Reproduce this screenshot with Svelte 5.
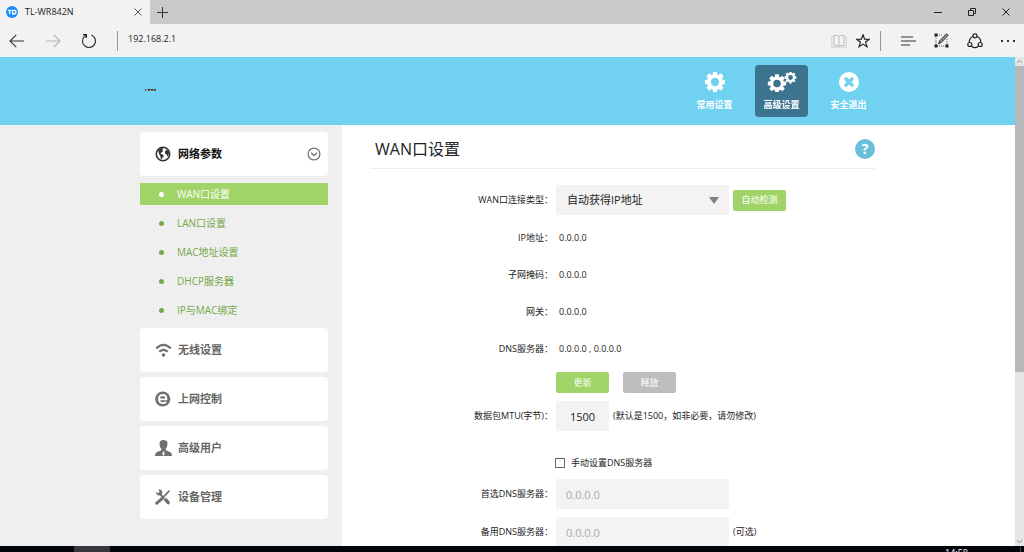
<script lang="ts">
  const subItems = ['WAN口设置', 'LAN口设置', 'MAC地址设置', 'DHCP服务器', 'IP与MAC绑定'];

  const sections = [
    { icon: 'wifi', label: '无线设置' },
    { icon: 'web', label: '上网控制' },
    { icon: 'user', label: '高级用户' },
    { icon: 'tools', label: '设备管理' }
  ];

  const navItems = [
    { id: 'basic', label: '常用设置' },
    { id: 'advanced', label: '高级设置' },
    { id: 'exit', label: '安全退出' }
  ];

  const status = [
    { label: 'IP地址', value: '0.0.0.0' },
    { label: '子网掩码', value: '0.0.0.0' },
    { label: '网关', value: '0.0.0.0' },
    { label: 'DNS服务器', value: '0.0.0.0 , 0.0.0.0' }
  ];

  const teeth = [0, 45, 90, 135, 180, 225, 270, 315];

  let activeNav = $state('advanced');
  let activeSub = $state('WAN口设置');
  let wanType = $state('dynamic');
  let mtu = $state('1500');
  let manualDns = $state(false);
</script>

{#snippet gear(cx: number, cy: number, r: number)}
  <g transform="translate({cx} {cy}) scale({r / 10})">
    <circle r="6" fill="none" stroke="#fff" stroke-width="3.6" />
    {#each teeth as angle}
      <path d="M-2.4 -7L-2 -10.2H2L2.4 -7Z" fill="#fff" transform="rotate({angle})" />
    {/each}
  </g>
{/snippet}

<div class="window">
  <div class="tabs">
    <div class="tab">
      <svg width="12" height="12" viewBox="0 0 12 12">
        <circle cx="6" cy="6" r="6" fill="#1a8cff" />
        <path d="M1.8 4.3H5.6M3.7 4.3V8.2M6.7 4.3V8H8.2Q10 8 10 6.2Q10 4.3 8.2 4.3H6" fill="none" stroke="#fff" stroke-width="1.3" />
      </svg>
      <span class="tab-title">TL-WR842N</span>
      <button class="bare" aria-label="关闭标签页">
        <svg width="8" height="8" viewBox="0 0 8 8"><path d="M0.5 0.5L7.5 7.5M7.5 0.5L0.5 7.5" stroke="#555" /></svg>
      </button>
    </div>
    <button class="bare new-tab" aria-label="新建标签页">
      <svg width="11" height="11" viewBox="0 0 11 11"><path d="M5.5 0V11M0 5.5H11" stroke="#333" /></svg>
    </button>
    <div class="window-controls">
      <button class="bare" aria-label="最小化">
        <svg width="8" height="8" viewBox="0 0 8 8"><path d="M0 4.5H8" stroke="#222" /></svg>
      </button>
      <button class="bare" aria-label="还原">
        <svg width="8" height="8" viewBox="0 0 8 8"><path d="M0.5 2.5H5.5V7.5H0.5ZM2.5 2.5V0.5H7.5V5.5H5.5" fill="none" stroke="#222" /></svg>
      </button>
      <button class="bare" aria-label="关闭">
        <svg width="8" height="8" viewBox="0 0 8 8"><path d="M0.5 0.5L7.5 7.5M7.5 0.5L0.5 7.5" stroke="#222" /></svg>
      </button>
    </div>
  </div>

  <div class="toolbar">
    <div class="history">
      <button class="bare" aria-label="后退">
        <svg width="16" height="14" viewBox="0 0 16 14"><path d="M15 7H1M7.3 0.8L1 7L7.3 13.2" fill="none" stroke="#333" stroke-width="1.1" /></svg>
      </button>
      <button class="bare" aria-label="前进">
        <svg width="16" height="14" viewBox="0 0 16 14"><path d="M1 7H15M8.7 0.8L15 7L8.7 13.2" fill="none" stroke="#b4b4b4" stroke-width="1.1" /></svg>
      </button>
      <button class="bare" aria-label="刷新">
        <svg width="16" height="16" viewBox="0 0 16 16">
          <path d="M10.5 2A6.5 6.5 0 1 1 3.6 3.2" fill="none" stroke="#333" stroke-width="1.2" />
          <path d="M2.2 1.8H5.2V4.8" fill="none" stroke="#111" stroke-width="1.5" />
        </svg>
      </button>
    </div>
    <input class="address" aria-label="地址" value="192.168.2.1" />
    <div class="page-actions">
      <button class="bare" aria-label="阅读视图">
        <svg width="16" height="14" viewBox="0 0 16 14">
          <path d="M3 1.5H6.5L8 2.5L9.5 1.5H13V11.5H9.5L8 12.5L6.5 11.5H3ZM8 2.5V12.5" fill="none" stroke="#bdbdbd" />
          <path d="M3 2.5H0.8V13.2H15.2V2.5H13" fill="none" stroke="#cfcfcf" />
        </svg>
      </button>
      <button class="bare" aria-label="添加到收藏夹">
        <svg width="14" height="14" viewBox="0 0 14 14"><path d="M7 0.8L8.6 5.1L13.2 5.3L9.6 8.1L10.9 12.7L7 10.1L3.1 12.7L4.4 8.1L0.8 5.3L5.4 5.1Z" fill="none" stroke="#222" stroke-width="1.2" /></svg>
      </button>
    </div>
    <div class="browser-actions">
      <button class="bare" aria-label="中心">
        <svg width="15" height="10" viewBox="0 0 15 10"><path d="M0 1H12M0 5H15M0 9H9" stroke="#333" stroke-width="1.1" /></svg>
      </button>
      <button class="bare" aria-label="做笔记">
        <svg width="15" height="15" viewBox="0 0 15 15">
          <path d="M3 2H9M2 3V12M3 13H12M13 6V12" stroke="#555" stroke-dasharray="1 1" />
          <path d="M0.5 0.5H3.5V3.5H0.5ZM0.5 11.5H3.5V14.5H0.5ZM11.5 11.5H14.5V14.5H11.5Z" fill="#222" />
          <path d="M4.5 10.8L5.8 7.8L12.5 0.8L14 2.3L7.5 9.3Z" fill="#999" stroke="#222" />
        </svg>
      </button>
      <button class="bare" aria-label="共享">
        <svg width="16" height="16" viewBox="0 0 16 16" fill="none" stroke="#222" stroke-width="1.2">
          <circle cx="8" cy="2.8" r="2" /><circle cx="2.8" cy="11.5" r="2" /><circle cx="13.2" cy="11.5" r="2" />
          <path d="M6 3.2Q2.2 5 2.2 9.3M10 3.2Q13.8 5 13.8 9.3M4.5 13.2Q8 16 11.5 13.2" />
        </svg>
      </button>
      <button class="bare" aria-label="更多">
        <svg width="14" height="4" viewBox="0 0 14 4"><path d="M0 1H2V3H0ZM6 1H8V3H6ZM12 1H14V3H12Z" fill="#333" /></svg>
      </button>
    </div>
  </div>

  <div class="viewport">
    <div class="page">
      <header>
        <div class="header-inner">
          <a class="logo" href="#home" aria-label="首页">
            <svg width="11" height="3" viewBox="0 0 11 3">
              <path d="M0 0H1V2H0ZM2 0H10V2H2ZM10 0H11V2H10Z" fill="#4a4a4a" />
              <path d="M2 1H3V2H2ZM5 1H6V2H5ZM8 1H9V2H8Z" fill="#e8c8b8" />
            </svg>
          </a>
          <nav>
            {#each navItems as item}
              <button class="nav-item" class:active={activeNav === item.id} onclick={() => (activeNav = item.id)}>
                {#if item.id === 'basic'}
                  <svg width="20" height="20" viewBox="0 0 20 20">{@render gear(10, 10, 10)}</svg>
                {:else if item.id === 'advanced'}
                  <svg width="30" height="20" viewBox="0 0 30 20">
                    {@render gear(10, 11.5, 9)}
                    {@render gear(23.5, 5.5, 5.8)}
                  </svg>
                {:else}
                  <svg width="20" height="20" viewBox="0 0 20 20">
                    <circle cx="10" cy="10" r="10" fill="#fff" />
                    <path d="M7 7L13 13M13 7L7 13" stroke="#70d2f0" stroke-width="3.6" stroke-linecap="round" />
                  </svg>
                {/if}
                <span>{item.label}</span>
              </button>
            {/each}
          </nav>
        </div>
      </header>

      <div class="body">
        <aside>
          <div class="menu">
            <button class="card open">
              <svg width="18" height="16" viewBox="0 0 18 16">
                <circle cx="8" cy="8" r="6.7" fill="none" stroke="#333" stroke-width="1.6" />
                <path d="M3 4.5L6 2L8.5 2.2L7.2 4L8.3 5L6.2 6.8L5.4 8L7.8 8.6L9 10L7.4 11.5L7 13.5L5.8 12.5L5.2 9.8L4 8L3.6 6Z" fill="#333" />
                <path d="M10 5.5L12 3.5L14 6.5L13.6 9L12.2 10.5L11.6 8.4L10 7.6Z" fill="#333" />
              </svg>
              <span class="card-label">网络参数</span>
              <svg width="14" height="14" viewBox="0 0 14 14" fill="none" stroke="#777">
                <circle cx="7" cy="7" r="5.9" stroke-width="1.3" />
                <path d="M4 5.8L7 8.6L10 5.8" stroke-width="1.4" />
              </svg>
            </button>
            <ul>
              {#each subItems as item}
                <li>
                  <a href="#{item}" class:active={activeSub === item} onclick={() => (activeSub = item)}>{item}</a>
                </li>
              {/each}
            </ul>
            {#each sections as section}
              <button class="card">
                <svg width="18" height="18" viewBox="0 0 18 18">
                  {#if section.icon === 'wifi'}
                    <path d="M1.2 7.4Q8.5 0.4 15.8 7.4M4.3 10.8Q8.5 6.8 12.7 10.8" fill="none" stroke="#707070" stroke-width="2.2" />
                    <circle cx="8.5" cy="14" r="1.8" fill="#707070" />
                  {:else if section.icon === 'web'}
                    <circle cx="7.7" cy="9" r="7.6" fill="#707070" />
                    <path d="M4.2 9.4H11.4Q11.4 5 7.9 5Q4 5.1 4 9.2Q4.2 13.1 8 13.1Q9.9 13.1 11.2 12.1" fill="none" stroke="#fff" stroke-width="1.9" />
                  {:else if section.icon === 'user'}
                    <path d="M4.5 4.5Q4.5 1 8.5 1Q12.5 1 12.5 4.5Q12.5 8 10.7 9.8V11.2L15.5 13.3Q16.8 14 17 17H0Q0.2 14 1.5 13.3L6.3 11.2V9.8Q4.5 8 4.5 4.5Z" fill="#707070" />
                    <path d="M7.9 12.5H9.1L9.6 15.5L8.5 16.8L7.4 15.5Z" fill="#fff" />
                  {:else}
                    <path d="M1.8 15.2L8 9.8" stroke="#707070" stroke-width="3" stroke-linecap="round" />
                    <path d="M8 9.5L13.9 3.2" stroke="#707070" stroke-width="1.8" stroke-linecap="round" />
                    <path d="M5 6.2L8.2 9.2" stroke="#707070" stroke-width="2" />
                    <path d="M10.8 11.8L13.2 14.6" stroke="#707070" stroke-width="3.4" stroke-linecap="round" />
                    <path d="M0.8 3.8L3 5.2L4.6 3.8L3.4 1.6Q7 1.2 7.4 4.3Q7.2 7.4 4.3 7.6Q1.2 7.2 0.8 3.8Z" fill="#707070" />
                  {/if}
                </svg>
                <span class="card-label">{section.label}</span>
              </button>
            {/each}
          </div>
        </aside>

        <main>
          <div class="content">
            <div class="title">
              <h1>WAN口设置</h1>
              <button class="help" aria-label="帮助">?</button>
            </div>

            <form onsubmit={(e) => e.preventDefault()}>
              <div class="row">
                <label class="label" for="wan-type">WAN口连接类型：</label>
                <div class="select">
                  <select id="wan-type" bind:value={wanType}>
                    <option value="dynamic">自动获得IP地址</option>
                    <option value="static">固定IP地址</option>
                    <option value="pppoe">宽带拨号上网</option>
                  </select>
                  <svg width="10" height="7" viewBox="0 0 10 7"><path d="M0 0H10L5 7Z" fill="#808080" /></svg>
                </div>
                <button class="btn">自动检测</button>
              </div>

              <dl>
                {#each status as item}
                  <div class="row">
                    <dt class="label">{item.label}：</dt>
                    <dd>{item.value}</dd>
                  </div>
                {/each}
              </dl>

              <div class="row buttons">
                <button class="btn">更新</button>
                <button class="btn disabled">释放</button>
              </div>

              <div class="row">
                <label class="label" for="mtu">数据包MTU(字节)：</label>
                <input id="mtu" class="text short" bind:value={mtu} />
                <span class="note">(默认是1500，如非必要，请勿修改)</span>
              </div>

              <label class="row check">
                <input type="checkbox" bind:checked={manualDns} />
                手动设置DNS服务器
              </label>

              <div class="row">
                <label class="label" for="dns1">首选DNS服务器：</label>
                <input id="dns1" class="text" value="0.0.0.0" disabled={!manualDns} />
              </div>
              <div class="row">
                <label class="label" for="dns2">备用DNS服务器：</label>
                <input id="dns2" class="text" value="0.0.0.0" disabled={!manualDns} />
                <span class="note">(可选)</span>
              </div>
            </form>
          </div>
        </main>
      </div>
    </div>

    <div class="scrollbar">
      <svg width="9" height="9" viewBox="0 0 9 9"><path d="M2 5.5L4.5 3.5L7 5.5" fill="none" stroke="#888" /></svg>
      <div class="track"><div class="thumb"></div></div>
      <svg width="9" height="9" viewBox="0 0 9 9"><path d="M2 3.5L4.5 5.5L7 3.5" fill="none" stroke="#888" /></svg>
    </div>
  </div>

  <div class="taskbar">
    <div class="task"></div>
    <time>14:58</time>
    <button class="bare show-desktop" aria-label="显示桌面"></button>
  </div>
</div>

<style>
  :global(body) {
    margin: 0;
  }

  .window {
    display: flex;
    flex-direction: column;
    height: 100vh;
    overflow: hidden;
    font-family: 'Open Sans', 'Noto Sans CJK SC', sans-serif;
    font-size: 9px;
    line-height: 14px;
    color: #222;
    background: #fff;
  }

  .window * {
    box-sizing: border-box;
  }

  svg {
    display: block;
    flex: none;
  }

  button,
  input,
  select {
    margin: 0;
    border: none;
    font: inherit;
    color: inherit;
  }

  button {
    cursor: pointer;
  }

  .bare {
    padding: 0;
    background: none;
  }

  /* browser frame */
  .tabs {
    display: flex;
    flex: none;
    height: 24px;
    background: #cacaca;
  }

  .tab {
    display: flex;
    align-items: center;
    gap: 7px;
    width: 150px;
    padding: 0 8px 0 6px;
    background: #f2f2f2;
  }

  .tab-title {
    flex: 1;
  }

  .new-tab {
    padding: 0 7px;
  }

  .window-controls {
    display: flex;
    gap: 26px;
    margin-left: auto;
    padding-right: 14px;
  }

  .toolbar {
    display: flex;
    flex: none;
    align-items: center;
    height: 33px;
    background: #f2f2f2;
  }

  .history {
    display: flex;
    align-items: center;
    gap: 20px;
    height: 20px;
    padding: 0 20px 0 9px;
    border-right: 1px solid #999;
  }

  .address {
    flex: 1;
    min-width: 0;
    height: 20px;
    padding: 0 10px 4px;
    background: none;
  }

  .page-actions {
    display: flex;
    align-items: center;
    gap: 9px;
    height: 20px;
    padding-right: 10px;
    border-right: 1px solid #999;
  }

  .browser-actions {
    display: flex;
    align-items: center;
    gap: 18px;
    padding: 0 9px 0 20px;
  }

  .viewport {
    display: flex;
    flex: 1;
    min-height: 0;
  }

  .page {
    display: flex;
    flex: 1;
    flex-direction: column;
    overflow: hidden;
  }

  .scrollbar {
    display: flex;
    flex-direction: column;
    width: 9px;
    background: #e6e6e6;
  }

  .track {
    flex: 1;
  }

  .thumb {
    height: 65%;
    background: #b8b8b8;
  }

  .taskbar {
    display: flex;
    flex: none;
    align-items: flex-start;
    height: 6px;
    padding: 0 3px 0 74px;
    overflow: hidden;
    background: #01030a;
    color: #fff;
  }

  .task {
    width: 36px;
    height: 6px;
    background: #36363b;
  }

  time {
    margin-left: auto;
  }

  .show-desktop {
    width: 53px;
    height: 6px;
    border-right: 1px solid #444;
  }

  /* router page */
  header {
    flex: none;
    padding: 8px 0;
    background: #70d2f0;
  }

  .header-inner {
    display: flex;
    align-items: center;
    justify-content: space-between;
    max-width: 735px;
    margin: 0 auto;
  }

  .logo {
    padding: 0 0 2px 5px;
  }

  nav {
    display: flex;
    gap: 14px;
  }

  .nav-item {
    display: flex;
    flex-direction: column;
    align-items: center;
    justify-content: flex-end;
    gap: 6px;
    width: 53px;
    height: 52px;
    padding: 0 0 5px;
    border-radius: 4px;
    background: none;
    color: #fff;
    font-weight: 700;
  }

  .nav-item.active {
    background: #3c738f;
  }

  .body {
    display: flex;
    flex: 1 0 auto;
  }

  aside {
    flex: 1 1 202px;
    padding: 7px 14px 0 0;
    background: #efefef;
  }

  .menu {
    width: 188px;
    margin-left: auto;
  }

  .card {
    display: flex;
    align-items: center;
    gap: 5px;
    width: 100%;
    height: 44px;
    margin-bottom: 5px;
    padding: 0 7px 0 15px;
    border-radius: 4px;
    background: #fff;
    color: #666;
    font-size: 11px;
    font-weight: 700;
    text-align: left;
  }

  .card.open {
    margin-bottom: 7px;
    color: #111;
  }

  .card-label {
    flex: 1;
  }

  ul {
    display: flex;
    flex-direction: column;
    gap: 7px;
    margin: 0 0 7px;
    padding: 0;
    list-style: none;
  }

  ul a {
    display: flex;
    align-items: center;
    gap: 13px;
    height: 22px;
    padding-left: 19px;
    color: #76a84a;
    font-size: 10px;
    text-decoration: none;
  }

  ul a::before {
    content: '';
    width: 5px;
    height: 5px;
    border-radius: 50%;
    background: currentColor;
  }

  ul a.active {
    background: #a0d468;
    color: #fff;
  }

  main {
    flex: 1 1 533px;
    padding-left: 28px;
    background: #fff;
  }

  .content {
    max-width: 505px;
  }

  .title {
    display: flex;
    align-items: center;
    justify-content: space-between;
    padding: 12px 0 7px 5px;
    border-bottom: 1px solid #ececec;
  }

  h1 {
    margin: 0;
    font-size: 16px;
    font-weight: 400;
    line-height: 24px;
  }

  .help {
    width: 20px;
    height: 20px;
    padding: 0;
    border-radius: 50%;
    background: #6bbfdb;
    color: #fff;
    font-size: 14px;
    font-weight: 700;
  }

  form {
    display: flex;
    flex-direction: column;
    gap: 8px;
    padding-top: 16px;
  }

  .row {
    display: flex;
    align-items: center;
  }

  .label {
    width: 183px;
    margin-right: 3px;
    text-align: right;
  }

  dl {
    display: flex;
    flex-direction: column;
    gap: 7px;
    margin: 0;
  }

  dl .row {
    height: 30px;
  }

  dd {
    margin: 0;
    padding-left: 3px;
  }

  .select {
    display: flex;
    align-items: center;
    width: 173px;
    margin-right: 4px;
    padding-right: 10px;
    background: #f3f3f3;
  }

  .select select {
    flex: 1;
    height: 30px;
    padding: 0 11px;
    appearance: none;
    background: none;
    font-size: 11px;
  }

  .btn {
    width: 53px;
    height: 21px;
    padding: 0;
    border-radius: 2px;
    background: #a0d468;
    color: #fff;
  }

  .btn.disabled {
    background: #bdbdbd;
  }

  .buttons {
    gap: 14px;
    padding-left: 186px;
  }

  .text {
    width: 173px;
    height: 30px;
    padding: 0 10px;
    background: #f3f3f3;
    font-size: 11px;
  }

  .text:disabled {
    color: #aaa;
  }

  .short {
    width: 53px;
    text-align: center;
  }

  .note {
    padding-left: 4px;
  }

  .check {
    gap: 6px;
    height: 16px;
    margin-top: 16px;
    padding-left: 185px;
  }

  .check input {
    width: 10px;
    height: 10px;
    border: 1px solid #666;
    appearance: none;
    background: #fff;
  }

  .check input:checked {
    background: #a0d468;
  }
</style>
